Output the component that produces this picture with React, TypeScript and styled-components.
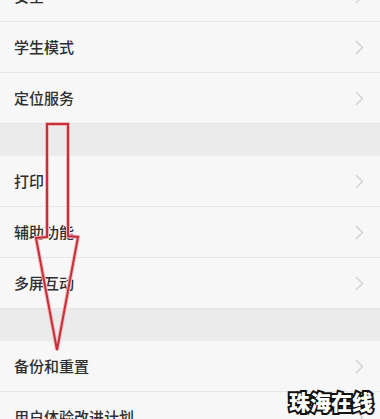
import React, { FC } from 'react';
import styled, { createGlobalStyle } from 'styled-components';

//region styled

const GlobalStyle = createGlobalStyle`
  html, body {
    margin: 0;
    padding: 0;
    background: #f7f7f7;
  }
  body {
    font-family: "Noto Sans CJK SC", "Noto Sans", sans-serif;
  }
`;

const Screen = styled.div`
  position: relative;
  width: 380px;
  height: 419px;
  overflow: hidden;
  background: #ebebeb;
`;

const List = styled.div`
  display: flex;
  flex-direction: column;
  margin-top: -29px;
`;

const Group = styled.div`
  display: flex;
  flex-direction: column;
  background: #f7f7f7;
`;

const Spacer = styled.div`
  height: 32px;
  background: #ebebeb;
  border-top: 1px solid #e4e4e4;
`;

const Row = styled.div`
  height: 50px;
  display: flex;
  align-items: center;
  justify-content: space-between;
  padding: 0 14px 0 14px;
  border-bottom: 1px solid #e6e6e6;

  &:last-child {
    border-bottom: none;
  }
`;

const Label = styled.span`
  font-size: 15px;
  font-weight: 500;
  color: #2e2e2e;
  margin-top: -1px;
`;

const Chevron = styled.svg`
  width: 9px;
  height: 15px;
  margin-right: 2px;
`;

const Overlay = styled.svg`
  position: absolute;
  left: 0;
  top: 0;
  pointer-events: none;
`;

const Watermark = styled.div`
  position: absolute;
  right: 7px;
  bottom: 3px;
  font-family: "Noto Sans CJK SC", sans-serif;
  font-weight: 900;
  font-size: 21px;
  color: #ffffff;
  -webkit-text-stroke: 4px #111111;
  paint-order: stroke fill;
`;

//endregion

const groups: string[][] = [
  ['安全', '学生模式', '定位服务'],
  ['打印', '辅助功能', '多屏互动'],
  ['备份和重置', '用户体验改进计划'],
];

const Arrow: FC = () => (
  <Chevron viewBox="0 0 9 15">
    <path d="M1 1 L7.5 7.5 L1 14" fill="none" stroke="#cdcdcd" strokeWidth="1.2" />
  </Chevron>
);

const App: FC = () => {
  return (
    <Screen>
      <GlobalStyle />
      <List>
        {groups.map((items, gi) => (
          <React.Fragment key={gi}>
            {gi > 0 && <Spacer />}
            <Group>
              {items.map((item) => (
                <Row key={item}>
                  <Label>{item}</Label>
                  <Arrow />
                </Row>
              ))}
            </Group>
          </React.Fragment>
        ))}
      </List>

      <Overlay width="380" height="419" viewBox="0 0 380 419">
        <path
          d="M47 124 L68 124 L68 236 L78 237 L57 350 L36 238 L47 237 Z"
          fill="none"
          stroke="#f3b7bb"
          strokeWidth="4"
          strokeLinejoin="miter"
        />
        <path
          d="M47 124 L68 124 L68 236 L78 237 L57 350 L36 238 L47 237 Z"
          fill="none"
          stroke="#c42f3a"
          strokeWidth="2"
          strokeLinejoin="miter"
        />
      </Overlay>

      <Watermark>珠海在线</Watermark>
    </Screen>
  );
};

export default App;
